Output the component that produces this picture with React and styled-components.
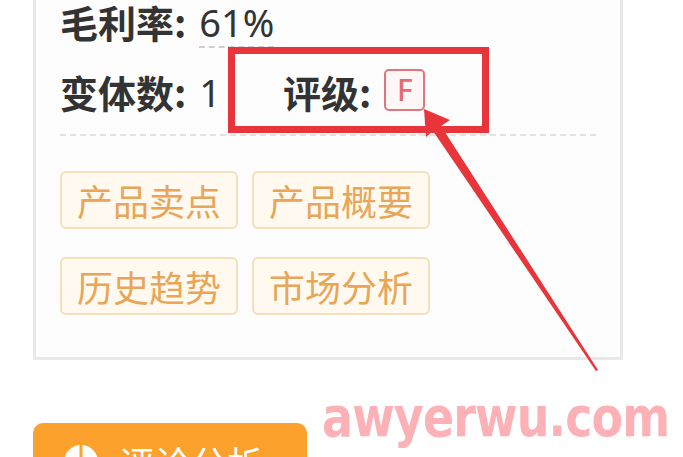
import styled, { createGlobalStyle } from "styled-components";

const GlobalStyle = createGlobalStyle`
  html, body {
    margin: 0;
    padding: 0;
    background: #ffffff;
    overflow: hidden;
  }
  body {
    width: 683px;
    height: 457px;
    font-family: "Noto Sans", "Noto Sans CJK SC", sans-serif;
  }
`;

const Page = styled.div`
  position: relative;
  width: 683px;
  height: 457px;
  overflow: hidden;
  padding-left: 33px;
  box-sizing: border-box;
`;

const Card = styled.div`
  width: 590px;
  box-sizing: border-box;
  margin-top: -40px;
  padding: 24px 24px 42px;
  border: 3px solid #e8e8e8;
  background: #fdfdfd;
`;

const StatRow = styled.div`
  display: grid;
  grid-template-columns: ${(p) => p.cols || "1fr"};
  align-items: center;
  height: 70px;
`;

const Stat = styled.div`
  display: flex;
  align-items: center;
  color: #333333;
  font-size: 38px;
  line-height: 1;
`;

const Label = styled.span`
  font-family: "Noto Sans CJK SC", "Noto Sans", sans-serif;
  font-weight: 700;
`;

const Value = styled.span`
  margin-left: 13px;
  font-family: "Noto Sans", "Noto Sans CJK SC", sans-serif;
  font-weight: 400;
  padding-bottom: ${(p) => (p.underline ? "5px" : "0")};
  border-bottom: ${(p) => (p.underline ? "2px dashed #cfcfcf" : "none")};
  margin-top: ${(p) => (p.underline ? "7px" : "0")};
`;

const Grade = styled.span`
  margin-left: 13px;
  width: 41px;
  height: 42px;
  box-sizing: border-box;
  display: inline-flex;
  align-items: center;
  justify-content: center;
  border: 2px solid #e2757c;
  border-radius: 5px;
  background: #fff6f6;
  color: #e36b73;
  font-family: "Noto Sans", sans-serif;
  font-weight: 500;
  font-size: 30px;
  margin-top: -4px;
`;

const Divider = styled.div`
  margin-top: 7px;
  border-top: 2px dashed #e2e2e2;
`;

const TagGrid = styled.div`
  display: grid;
  grid-template-columns: 178px 178px;
  column-gap: 14px;
  row-gap: 28px;
  margin-top: 35px;
`;

const Tag = styled.div`
  height: 58px;
  box-sizing: border-box;
  display: flex;
  align-items: center;
  justify-content: center;
  border: 2px solid #f6dfbb;
  border-radius: 6px;
  background: #fff9f0;
  color: #e8a658;
  font-family: "Noto Sans CJK SC", sans-serif;
  font-size: 36px;
`;

const ActionButton = styled.div`
  margin-top: 63px;
  width: 274px;
  height: 64px;
  box-sizing: border-box;
  display: flex;
  align-items: center;
  gap: 20px;
  padding: 14px 0 0 30px;
  border-radius: 10px;
  background: #fba12c;
  color: #ffffff;
  font-family: "Noto Sans CJK SC", sans-serif;
  font-size: 36px;
`;

const Watermark = styled.div`
  position: absolute;
  left: 322px;
  top: 384px;
  color: #fbb1b6;
  font-family: "DejaVu Sans", sans-serif;
  font-weight: 700;
  font-size: 56px;
  letter-spacing: -1px;
  transform: scaleX(0.82);
  transform-origin: left top;
  white-space: nowrap;
`;

const Highlight = styled.div`
  position: absolute;
  left: 228px;
  top: 47px;
  width: 261px;
  height: 86px;
  box-sizing: border-box;
  border: 7px solid #e8353b;
`;

const Overlay = styled.svg`
  position: absolute;
  left: 0;
  top: 0;
  pointer-events: none;
`;

const PieIcon = () => (
  <svg width="36" height="36" viewBox="0 0 36 36">
    <circle cx="18" cy="18" r="17" fill="#ffffff" />
    <path d="M18 1 L18 18 L34 18" fill="none" stroke="#fba12c" strokeWidth="3" />
  </svg>
);

const tags = ["产品卖点", "产品概要", "历史趋势", "市场分析"];

export default function App() {
  return (
    <>
      <GlobalStyle />
      <Page>
        <Card>
          <StatRow>
            <Stat>
              <Label>毛利率:</Label>
              <Value underline>61%</Value>
            </Stat>
          </StatRow>
          <StatRow cols="223px 1fr">
            <Stat>
              <Label>变体数:</Label>
              <Value>1</Value>
            </Stat>
            <Stat>
              <Label>评级:</Label>
              <Grade>F</Grade>
            </Stat>
          </StatRow>
          <Divider />
          <TagGrid>
            {tags.map((t) => (
              <Tag key={t}>{t}</Tag>
            ))}
          </TagGrid>
        </Card>
        <ActionButton>
          <PieIcon />
          <span>评论分析</span>
        </ActionButton>

        <Watermark>awyerwu.com</Watermark>
        <Highlight />
        <Overlay width="683" height="457" viewBox="0 0 683 457">
          <polygon
            points="424,109 450,120 441,126 598,370 596,371 433,131 426,137"
            fill="#e8353b"
          />
        </Overlay>
      </Page>
    </>
  );
}
